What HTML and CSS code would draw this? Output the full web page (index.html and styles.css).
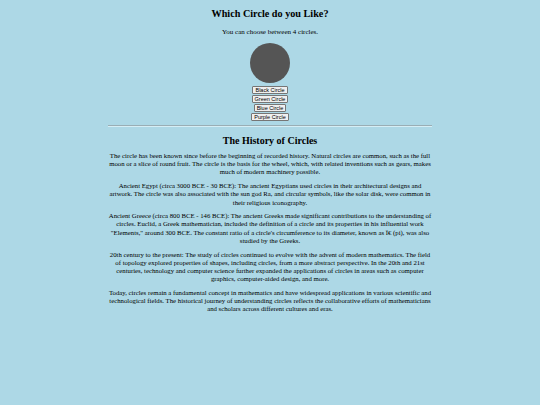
FILE: index.html
```html
<!DOCTYPE html>
<html>
<head>
<meta charset="utf-8">
<title>Which Circle do you Like?</title>
<link rel="stylesheet" href="styles.css">
</head>
<body>
<main class="page">
  <h1 class="title">Which Circle do you Like?</h1>
  <p class="intro">You can choose between 4 circles.</p>
  <div class="circle"></div>
  <div class="buttons">
    <button class="btn">Black Circle</button>
    <button class="btn">Green Circle</button>
    <button class="btn">Blue Circle</button>
    <button class="btn">Purple Circle</button>
  </div>
  <hr class="rule">
  <section class="history">
    <h2 class="subtitle">The History of Circles</h2>
    <p class="para">The circle has been known since before the beginning of recorded history. Natural circles are common, such as the full moon or a slice of round fruit. The circle is the basis for the wheel, which, with related inventions such as gears, makes much of modern machinery possible.</p>
    <p class="para">Ancient Egypt (circa 3000 BCE - 30 BCE): The ancient Egyptians used circles in their architectural designs and artwork. The circle was also associated with the sun god Ra, and circular symbols, like the solar disk, were common in their religious iconography.</p>
    <p class="para">Ancient Greece (circa 800 BCE - 146 BCE): The ancient Greeks made significant contributions to the understanding of circles. Euclid, a Greek mathematician, included the definition of a circle and its properties in his influential work "Elements," around 300 BCE. The constant ratio of a circle's circumference to its diameter, known as Ï€ (pi), was also studied by the Greeks.</p>
    <p class="para">20th century to the present: The study of circles continued to evolve with the advent of modern mathematics. The field of topology explored properties of shapes, including circles, from a more abstract perspective. In the 20th and 21st centuries, technology and computer science further expanded the applications of circles in areas such as computer graphics, computer-aided design, and more.</p>
    <p class="para">Today, circles remain a fundamental concept in mathematics and have widespread applications in various scientific and technological fields. The historical journey of understanding circles reflects the collaborative efforts of mathematicians and scholars across different cultures and eras.</p>
  </section>
</main>
</body>
</html>
```
FILE: styles.css
```css
html, body {
  margin: 0;
  padding: 0;
  background: #add8e6;
}
body {
  font-family: "Liberation Serif", "Times New Roman", serif;
  color: #000;
}
.page {
  width: 60%;
  margin: 0 auto;
  padding-top: 8px;
  text-align: center;
  display: flex;
  flex-direction: column;
  align-items: center;
}
.title {
  font-size: 10.2px;
  line-height: 12px;
  margin: 0;
}
.intro {
  font-size: 7px;
  line-height: 8px;
  margin: 8px 0 7px;
}
.circle {
  width: 40px;
  height: 40px;
  border-radius: 50%;
  background: #555;
}
.buttons {
  display: flex;
  flex-direction: column;
  align-items: center;
  gap: 1px;
  margin-top: 3px;
}
.btn {
  font-family: "Liberation Sans", Arial, sans-serif;
  font-size: 5.5px;
  line-height: 6px;
  height: 8px;
  padding: 0 2px;
  color: #000;
  background: #efefef;
  border: 1px solid #767676;
  border-radius: 1px;
}
.rule {
  align-self: stretch;
  margin: 4px 0 0;
  border: 0;
  border-top: 1px solid #9aaeb5;
  border-bottom: 1px solid #d6eef5;
}
.history {
  display: flex;
  flex-direction: column;
  align-items: center;
}
.subtitle {
  font-size: 10px;
  line-height: 12px;
  margin: 8px 0 5px;
}
.para {
  font-size: 6.75px;
  line-height: 8.2px;
  margin: 0 0 5.5px;
}
```
